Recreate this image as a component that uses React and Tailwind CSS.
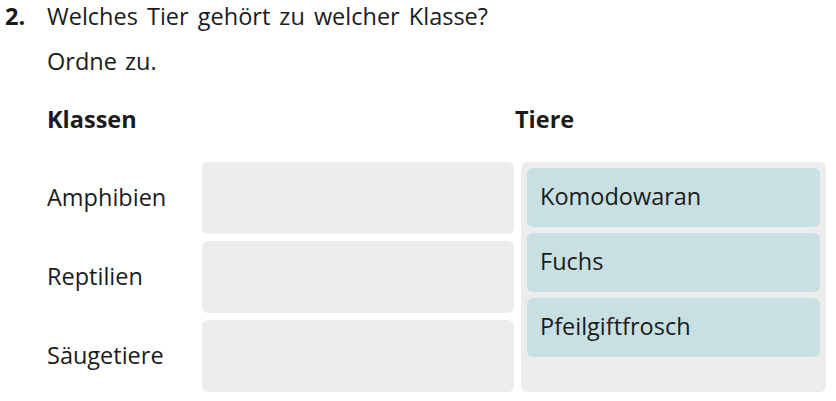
export default function App() {
  const classes = ['Amphibien', 'Reptilien', 'Säugetiere']
  const animals = ['Komodowaran', 'Fuchs', 'Pfeilgiftfrosch']

  return (
    <div className="w-[836px] h-[401px] overflow-hidden bg-white text-[#1b1b1b] text-[23.5px] font-['Open_Sans','Liberation_Sans',sans-serif]">
      <div className="flex h-[34px] items-center">
        <span className="w-[47px] pl-[5px] font-bold">2.</span>
        <span className="[word-spacing:3px]">Welches Tier gehört zu welcher Klasse?</span>
      </div>
      <div className="flex h-[34px] items-center pl-[47px] mt-[11px] [word-spacing:2px]">Ordne zu.</div>
      <div className="flex h-[34px] items-center pl-[47px] mt-[24px] font-bold">
        <span className="w-[468px]">Klassen</span>
        <span>Tiere</span>
      </div>
      <div className="flex pl-[47px] mt-[25px] gap-[7px]">
        <div className="flex w-[467px] flex-col gap-[7px]">
          {classes.map((c) => (
            <div key={c} className="flex h-[72px] items-center">
              <span className="w-[155px] shrink-0">{c}</span>
              <div className="h-full flex-1 rounded-md bg-[#ececec]" />
            </div>
          ))}
        </div>
        <div className="flex h-[230px] w-[305px] flex-col gap-[6px] rounded-md bg-[#ececec] p-[6px]">
          {animals.map((a) => (
            <div key={a} className="flex h-[59px] items-center rounded-md bg-[#c8e0e1] px-[13px] pb-[2px]">
              {a}
            </div>
          ))}
        </div>
      </div>
    </div>
  )
}
